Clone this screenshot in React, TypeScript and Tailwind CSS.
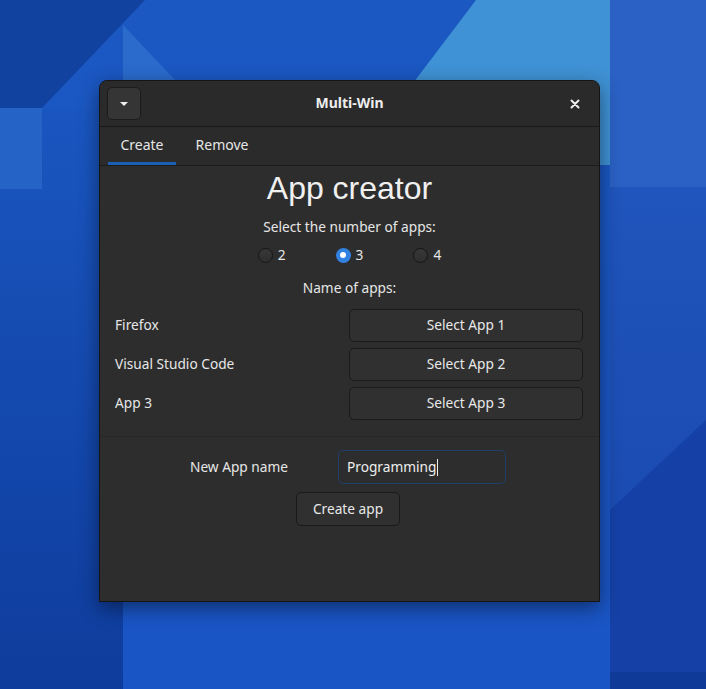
import {useState} from 'react';

const font = {fontFamily: '"Noto Sans", "Open Sans", sans-serif'};

function Wallpaper() {
    return (
        <svg className="absolute inset-0" width="706" height="689" viewBox="0 0 706 689">
            <defs>
                <linearGradient id="base" x1="0" y1="0" x2="0" y2="1">
                    <stop offset="0" stopColor="#1b58c2" />
                    <stop offset="1" stopColor="#1a55c6" />
                </linearGradient>
                <linearGradient id="left" x1="0" y1="0" x2="0" y2="1">
                    <stop offset="0" stopColor="#1a56c0" />
                    <stop offset="1" stopColor="#0e3c9c" />
                </linearGradient>
                <linearGradient id="right" x1="0" y1="0" x2="0" y2="1">
                    <stop offset="0" stopColor="#2055bd" />
                    <stop offset="1" stopColor="#1846ab" />
                </linearGradient>
            </defs>
            <rect width="706" height="689" fill="url(#base)" />
            <rect x="0" y="108" width="123" height="581" fill="url(#left)" />
            <polygon points="0,0 145,0 42,108 0,108" fill="#1142a0" />
            <polygon points="0,108 42,108 42,189 0,189" fill="#2563c6" />
            <polygon points="123,25 176,81 123,81" fill="#2a6bcc" />
            <polygon points="476,0 610,0 610,165 351,165" fill="#3f92d5" />
            <polygon points="610,0 706,0 706,187 610,187" fill="#2b61c4" />
            <polygon points="610,187 706,187 706,689 610,689" fill="url(#right)" />
            <polygon points="706,420 706,689 610,689 610,510" fill="#1541a6" />
            <polygon points="610,672 706,672 706,689 610,689" fill="#103a98" />
        </svg>
    );
}

function Radio({label, checked}: {label: string; checked?: boolean}) {
    return (
        <label className="flex items-center gap-[5px] text-[13.7px] text-[#e6e6e6] leading-5">
            {checked ? (
                <span className="w-[15px] h-[15px] rounded-full bg-[#3081e2] flex items-center justify-center">
                    <span className="w-[6px] h-[6px] rounded-full bg-white" />
                </span>
            ) : (
                <span className="w-[15px] h-[15px] rounded-full bg-gradient-to-b from-[#383838] to-[#2e2e2e] border border-[#161616]" />
            )}
            {label}
        </label>
    );
}

function Btn({children, className}: {children: React.ReactNode; className?: string}) {
    return (
        <button className={"h-[33px] rounded-[5px] bg-[#303030] border border-[#1a1a1a] text-[13.7px] text-[#e8e8e8] " + (className || '')} type="button">
            {children}
        </button>
    );
}

export default function App() {
    const [count, setCount] = useState(3);
    const apps = ['Firefox', 'Visual Studio Code', 'App 3'];

    return (
        <div className="relative w-[706px] h-[689px] overflow-hidden" style={font}>
            <Wallpaper />
            <div className="absolute left-[99px] top-[80px] w-[501px] h-[522px] rounded-t-[8px] bg-[#2d2d2d] border border-[#151515] shadow-[0_6px_20px_rgba(0,0,0,0.45)] flex flex-col overflow-hidden">
                {/* header */}
                <div className="h-[46px] flex items-center px-[7px] bg-[#2a2a2a] border-b border-[#191919] shrink-0">
                    <button className="w-[34px] h-[33px] rounded-[5px] bg-[#353535] border border-[#1c1c1c] flex items-center justify-center" type="button">
                        <svg width="10" height="6" viewBox="0 0 10 6"><polygon points="1,1 9,1 5,5" fill="#eeeeee" /></svg>
                    </button>
                    <div className="flex-1 text-center text-[14px] font-bold text-[#eeeeee] pb-[2px]">Multi-Win</div>
                    <button className="w-[34px] h-[33px] flex items-center justify-center" type="button">
                        <svg width="10" height="10" viewBox="0 0 10 10"><path d="M1.5 1.5 L8.5 8.5 M8.5 1.5 L1.5 8.5" stroke="#eeeeee" strokeWidth="2" strokeLinecap="round" /></svg>
                    </button>
                </div>

                {/* tabs */}
                <div className="h-[39px] flex px-[8px] border-b border-[#1c1c1c] bg-[#2b2b2b] shrink-0">
                    <div className="w-[68px] flex items-center justify-center text-[14px] text-[#e6e6e6] border-b-[3px] border-[#1a5fb4] pb-[1px]">Create</div>
                    <div className="w-[92px] flex items-center justify-center text-[14px] text-[#e6e6e6] pb-[4px]">Remove</div>
                </div>

                {/* content */}
                <div className="flex flex-col items-center">
                    <div className="mt-[4px] text-[32px] leading-[37px] text-[#f0f0f0]" style={{fontFamily: '"Liberation Sans", Arial, sans-serif'}}>App creator</div>
                    <div className="mt-[10px] text-[13.7px] leading-5 text-[#e6e6e6]">Select the number of apps:</div>
                    <div className="mt-[8px] flex gap-[50px]" onClick={() => setCount(count)}>
                        <Radio label="2" checked={count === 2} />
                        <Radio label="3" checked={count === 3} />
                        <Radio label="4" checked={count === 4} />
                    </div>
                    <div className="mt-[13px] text-[13.7px] leading-5 text-[#e6e6e6]">Name of apps:</div>
                </div>

                <div className="mt-[11px] pl-[15px] pr-[16px] grid grid-cols-2 gap-y-[6px]">
                    {apps.map((a, i) => (
                        <div key={a} className="contents">
                            <div className="h-[33px] flex items-center text-[13.7px] text-[#e6e6e6]">{a}</div>
                            <Btn>Select App {i + 1}</Btn>
                        </div>
                    ))}
                </div>

                <div className="mt-[16px] h-px bg-[#272727]" />

                <div className="mt-[13px] flex justify-center items-center gap-[50px] pr-[3px]">
                    <span className="text-[13.7px] text-[#e6e6e6]">New App name</span>
                    <div className="w-[168px] h-[34px] rounded-[5px] border border-[#1e3f66] bg-[#2d2d2d] flex items-center px-[8px] text-[13.7px] text-[#eeeeee]">
                        Programming<span className="w-px h-[17px] bg-[#eeeeee] ml-px" />
                    </div>
                </div>

                <div className="mt-[8px] flex justify-center pr-[3px]">
                    <Btn className="w-[104px] h-[34px]">Create app</Btn>
                </div>
            </div>
        </div>
    );
}
